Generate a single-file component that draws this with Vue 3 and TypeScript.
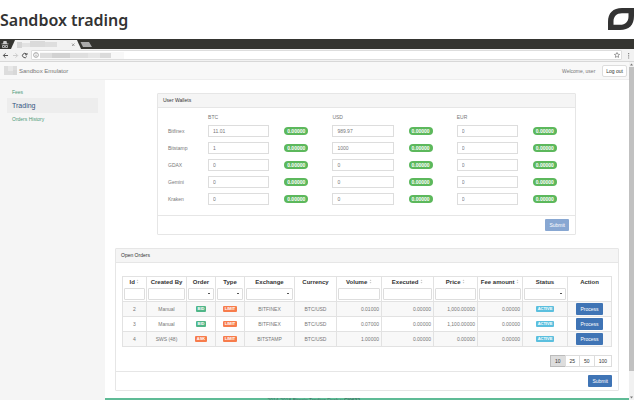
<script setup lang="ts">
import { ref } from 'vue'

interface Wallet {
  exchange: string
  amounts: string[]
}

interface Column {
  label: string
  width: number
  sortable: boolean
  filter: 'text' | 'select' | 'none'
}

interface Order {
  id: number
  createdBy: string
  side: 'BID' | 'ASK'
  type: string
  exchange: string
  currency: string
  volume: string
  executed: string
  price: string
  fee: string
  status: string
}

const currencies = ['BTC', 'USD', 'EUR']

const wallets = ref<Wallet[]>([
  { exchange: 'Bitfinex', amounts: ['11.01', '989.97', '0'] },
  { exchange: 'Bitstamp', amounts: ['1', '1000', '0'] },
  { exchange: 'GDAX', amounts: ['0', '0', '0'] },
  { exchange: 'Gemini', amounts: ['0', '0', '0'] },
  { exchange: 'Kraken', amounts: ['0', '0', '0'] },
])

const columns: Column[] = [
  { label: 'Id', width: 24, sortable: true, filter: 'text' },
  { label: 'Created By', width: 40, sortable: false, filter: 'text' },
  { label: 'Order', width: 29, sortable: false, filter: 'select' },
  { label: 'Type', width: 29, sortable: false, filter: 'select' },
  { label: 'Exchange', width: 50, sortable: false, filter: 'select' },
  { label: 'Currency', width: 42, sortable: false, filter: 'none' },
  { label: 'Volume', width: 45, sortable: true, filter: 'text' },
  { label: 'Executed', width: 52, sortable: true, filter: 'text' },
  { label: 'Price', width: 44, sortable: true, filter: 'text' },
  { label: 'Fee amount', width: 45, sortable: true, filter: 'text' },
  { label: 'Status', width: 45, sortable: false, filter: 'select' },
  { label: 'Action', width: 44, sortable: false, filter: 'none' },
]
const totalWidth = columns.reduce((sum, c) => sum + c.width, 0)

const orders: Order[] = [
  { id: 2, createdBy: 'Manual', side: 'BID', type: 'LIMIT', exchange: 'BITFINEX', currency: 'BTC/USD', volume: '0.01000', executed: '0.00000', price: '1,000.00000', fee: '0.00000', status: 'ACTIVE' },
  { id: 3, createdBy: 'Manual', side: 'BID', type: 'LIMIT', exchange: 'BITFINEX', currency: 'BTC/USD', volume: '0.07000', executed: '0.00000', price: '1,100.00000', fee: '0.00000', status: 'ACTIVE' },
  { id: 4, createdBy: 'SWS (48)', side: 'ASK', type: 'LIMIT', exchange: 'BITSTAMP', currency: 'BTC/USD', volume: '1.00000', executed: '0.00000', price: '0.00000', fee: '0.00000', status: 'ACTIVE' },
]

const pageSizes = [10, 25, 50, 100]
const pageSize = ref(10)
</script>

<template>
  <div class="page">
    <header class="masthead">
      <h1>Sandbox trading</h1>
      <svg class="logo" viewBox="0 0 26 22" aria-hidden="true">
        <path fill="#333" fill-rule="evenodd" d="M0 22V14C0 5 5 0 14 0H26V8C26 17 21 22 12 22ZM5.500 16.800H12C17.500 16.800 20.500 13.500 20.500 8.500V5.200H14C8.500 5.200 5.500 8.500 5.500 13.500Z" />
      </svg>
    </header>

    <section class="browser">
      <div class="tabs">
        <svg class="incognito" viewBox="0 0 16 9" aria-hidden="true">
          <path fill="#ccc" d="M3.500 1H6.500L7 3.500H3ZM1.500 3.500H8.500V4.300H1.500Z" />
          <path fill="none" stroke="#ccc" stroke-width=".8" d="M2.500 7.500V5.500H4.500V7.500ZM5.500 7.500V5.500H7.500V7.500Z" />
        </svg>
        <svg class="tab-shape" viewBox="0 0 88 9" aria-hidden="true">
          <path fill="#f2f2f2" d="M0 9L4 0H66L70 9Z" />
          <rect x="6" y="2" width="5" height="6" fill="#d5d5d5" />
          <rect x="11" y="3" width="12" height="4" fill="#e2e2e2" />
          <rect x="19" y="1" width="15" height="6" fill="#dadada" />
          <rect x="34" y="2" width="12" height="5" fill="#dedede" />
          <path stroke="#888" stroke-width=".8" d="M61 3.500L63.500 6M63.500 3.500L61 6" />
          <path fill="#aaa" d="M69.500 2H78L81 7H72Z" />
        </svg>
      </div>
      <div class="toolbar">
        <svg class="nav-icons" viewBox="0 0 30 12" aria-hidden="true">
          <g fill="none" stroke-width="1">
            <path stroke="#555" d="M8 5.500H3.500M5.500 3.300L3.300 5.500L5.500 7.700" />
            <path stroke="#ccc" d="M13 5.500H17.500M15.500 3.300L17.700 5.500L15.500 7.700" />
            <path stroke="#555" d="M26.500 4.200A2.200 2.200 0 1 0 26.700 6.500M27 3V4.800H25" />
          </g>
        </svg>
        <div class="address">
          <svg class="info" viewBox="0 0 8 8" aria-hidden="true">
            <circle cx="4" cy="4" r="2.400" fill="none" stroke="#888" stroke-width=".7" />
            <path stroke="#888" stroke-width=".8" d="M4 3.600V5.400M4 2.400V3" />
          </svg>
          <svg class="url-blocks" viewBox="0 0 84 7" aria-hidden="true">
            <rect width="84" height="7" fill="#f8f8f8" />
            <rect y="1" width="12" height="5" fill="#ddd" />
            <rect x="12" y="1" width="18" height="5" fill="#d2d2d2" />
            <rect x="30" y="1" width="18" height="5" fill="#dfdfdf" />
            <rect x="48" y="1" width="12" height="5" fill="#e6e6e6" />
            <rect x="60" y="1" width="11" height="5" fill="#dbdbdb" />
          </svg>
          <svg class="star" viewBox="0 0 8 8" aria-hidden="true">
            <path fill="none" stroke="#777" stroke-width=".7" d="M4 1.500L4.800 3.200L6.600 3.400L5.300 4.600L5.600 6.400L4 5.500L2.400 6.400L2.700 4.600L1.400 3.400L3.200 3.200Z" />
          </svg>
        </div>
        <svg class="dots" viewBox="0 0 11 12" aria-hidden="true">
          <path fill="#888" d="M5 3H6.200V4.200H5ZM5 5.200H6.200V6.400H5ZM5 7.400H6.200V8.600H5Z" />
        </svg>
      </div>

      <div class="viewport">
        <div class="app">
          <nav class="navbar">
            <svg class="brand-mark" viewBox="0 0 13 9" aria-hidden="true">
              <rect width="13" height="9" fill="#ddd" />
              <rect x="4" width="5" height="5" fill="#e8e8e8" />
              <rect x="9" y="4" width="4" height="5" fill="#d8d8d8" />
            </svg>
            <span class="brand">Sandbox Emulator</span>
            <span class="welcome">Welcome, user</span>
            <button type="button" class="logout">Log out</button>
          </nav>

          <div class="body">
            <aside class="sidebar">
              <a href="#fees">Fees</a>
              <a href="#trading" class="active">Trading</a>
              <a href="#history">Orders History</a>
            </aside>

            <main class="content">
              <form class="panel wallets" @submit.prevent>
                <h2>User Wallets</h2>
                <div class="wallet-grid">
                  <span></span>
                  <template v-for="c in currencies" :key="c">
                    <span class="currency">{{ c }}</span>
                    <span></span>
                  </template>
                  <template v-for="w in wallets" :key="w.exchange">
                    <span>{{ w.exchange }}</span>
                    <template v-for="(c, i) in currencies" :key="c">
                      <input v-model="w.amounts[i]" type="text" :aria-label="`${w.exchange} ${c}`" />
                      <span class="badge">0.00000</span>
                    </template>
                  </template>
                </div>
                <footer>
                  <button type="submit" class="primary muted">Submit</button>
                </footer>
              </form>

              <section class="panel">
                <h2>Open Orders</h2>
                <div class="orders">
                  <table>
                    <colgroup>
                      <col v-for="c in columns" :key="c.label" :style="{ width: (c.width / totalWidth) * 100 + '%' }" />
                    </colgroup>
                    <thead>
                      <tr class="titles">
                        <th v-for="c in columns" :key="c.label" scope="col">
                          {{ c.label }}
                          <svg v-if="c.sortable" class="sort" viewBox="0 0 3 5" aria-hidden="true">
                            <path fill="#ccc" d="M0.500 2L1.500 0.500L2.500 2ZM0.500 3L1.500 4.500L2.500 3Z" />
                          </svg>
                        </th>
                      </tr>
                      <tr class="filters">
                        <td v-for="c in columns" :key="c.label">
                          <input v-if="c.filter === 'text'" type="text" :aria-label="c.label" />
                          <select v-else-if="c.filter === 'select'" :aria-label="c.label">
                            <option></option>
                          </select>
                        </td>
                      </tr>
                    </thead>
                    <tbody>
                      <tr v-for="o in orders" :key="o.id">
                        <td>{{ o.id }}</td>
                        <td>{{ o.createdBy }}</td>
                        <td><span class="tag" :class="o.side.toLowerCase()">{{ o.side }}</span></td>
                        <td><span class="tag limit">{{ o.type }}</span></td>
                        <td>{{ o.exchange }}</td>
                        <td>{{ o.currency }}</td>
                        <td class="num">{{ o.volume }}</td>
                        <td class="num">{{ o.executed }}</td>
                        <td class="num">{{ o.price }}</td>
                        <td class="num">{{ o.fee }}</td>
                        <td><span class="tag status">{{ o.status }}</span></td>
                        <td><button type="button" class="primary">Process</button></td>
                      </tr>
                    </tbody>
                  </table>
                  <div class="sizes">
                    <button v-for="s in pageSizes" :key="s" type="button" :class="{ on: s === pageSize }" @click="pageSize = s">{{ s }}</button>
                  </div>
                </div>
                <footer>
                  <button type="button" class="primary">Submit</button>
                </footer>
              </section>

              <div class="copyright">2014-2018 Bitcoin Trading Desk v <b>CI9632</b></div>
            </main>
          </div>
        </div>
        <div class="scrollbar" aria-hidden="true">
          <svg viewBox="0 0 5 5"><path fill="#777" d="M1 3.500L2.500 1.500L4 3.500Z" /></svg>
          <div class="thumb"></div>
          <svg viewBox="0 0 5 5"><path fill="#777" d="M1 1.500L2.500 3.500L4 1.500Z" /></svg>
        </div>
      </div>
    </section>
  </div>
</template>

<style>
body {
  margin: 0;
  background: #fff;
}
</style>

<style scoped>
.page,
.page * {
  box-sizing: border-box;
}

.page {
  display: flex;
  flex-direction: column;
  height: 100vh;
  overflow: hidden;
  font-family: "Liberation Sans", Arial, sans-serif;
  font-size: 5px;
  line-height: 6px;
  color: #777;
}

button,
input,
select {
  margin: 0;
  font: inherit;
  color: inherit;
}

svg {
  display: block;
  flex: none;
}

.masthead {
  display: flex;
  flex: none;
  align-items: flex-start;
  justify-content: space-between;
  height: 39px;
  padding-top: 8px;
}

h1 {
  margin: 0;
  font: 600 16px/24px "Noto Sans", sans-serif;
  color: #333;
}

.logo {
  width: 26px;
  height: 22px;
}

.browser {
  display: flex;
  flex: 1;
  flex-direction: column;
  min-height: 0;
}

.tabs {
  display: flex;
  flex: none;
  align-items: flex-end;
  height: 10px;
  background: #353531;
}

.incognito {
  width: 16px;
  height: 9px;
  margin-right: -5px;
}

.tab-shape {
  width: 88px;
  height: 9px;
}

.toolbar {
  display: flex;
  flex: none;
  height: 13px;
  padding: 1px 0;
  background: #f2f2f2;
  border-bottom: 1px solid #d8d8d8;
}

.nav-icons {
  width: 30px;
  height: 12px;
}

.address {
  display: flex;
  flex: 1;
  align-items: center;
  margin: 0 1px;
  background: #fff;
  border: 1px solid #ddd;
  border-radius: 1px;
}

.info,
.star {
  width: 8px;
  height: 8px;
}

.url-blocks {
  width: 84px;
  height: 7px;
}

.star {
  margin-left: auto;
}

.dots {
  width: 11px;
  height: 12px;
}

.viewport {
  display: flex;
  flex: 1;
  min-height: 0;
}

.app {
  display: flex;
  flex: 1;
  flex-direction: column;
  min-width: 0;
}

.navbar {
  display: flex;
  flex: none;
  align-items: center;
  height: 18px;
  padding: 0 2px 0 4px;
  background: #f8f8f8;
  border-bottom: 1px solid #eee;
}

.brand-mark {
  width: 13px;
  height: 9px;
  margin-right: 2px;
}

.brand {
  font-size: 6px;
  line-height: 8px;
}

.welcome {
  margin: 0 7px 0 auto;
}

.logout {
  height: 12px;
  padding: 0 3px;
  color: #333;
  background: #fff;
  border: 1px solid #ddd;
  border-radius: 2px;
}

.body {
  display: flex;
  flex: 1;
  min-height: 0;
}

.sidebar {
  flex: none;
  width: 105px;
  padding: 6px 7px;
  background: #f5f5f5;
}

.sidebar a {
  display: block;
  padding: 3px 5px;
  color: #4d9a78;
  text-decoration: none;
}

.sidebar .active {
  font-size: 7px;
  line-height: 9px;
  color: #35557f;
  background: #ededed;
}

.content {
  display: flex;
  flex: 1;
  flex-direction: column;
  min-width: 0;
  padding-top: 13px;
}

.panel {
  flex: none;
  margin: 0 10px 13px;
  background: #fff;
  border: 1px solid #e6e6e6;
  border-radius: 1px;
}

.wallets {
  margin: 0 53px 13px 52px;
}

h2 {
  margin: 0;
  padding: 4px 5px;
  font-size: 5px;
  font-weight: 400;
  line-height: 5px;
  color: #333;
  background: #f5f5f5;
  border-bottom: 1px solid #e6e6e6;
}

.wallet-grid {
  display: grid;
  grid-template-columns: 40fr repeat(3, 61fr 63fr);
  grid-template-rows: 11px;
  grid-auto-rows: 12px;
  row-gap: 5px;
  align-items: center;
  margin-right: -6px;
  padding: 1px 0 10px 10px;
}

.currency {
  align-self: end;
}

.wallet-grid input {
  width: 100%;
  height: 12px;
  padding: 0 4px;
  background: #fff;
  border: 1px solid #ddd;
}

.badge {
  width: 24px;
  height: 8px;
  margin-left: 15px;
  font-weight: 700;
  line-height: 8px;
  color: #fff;
  text-align: center;
  background: #5cb85c;
  border-radius: 4px;
}

.panel footer {
  display: flex;
  justify-content: flex-end;
  padding: 3px 6px;
  border-top: 1px solid #e6e6e6;
}

.primary {
  height: 12px;
  padding: 0 4px;
  color: #fff;
  background: #3f74b5;
  border: 0;
  border-radius: 1px;
}

.muted {
  background: #88a7d2;
}

.orders {
  padding: 13px 6px 4px;
}

table {
  width: 100%;
  table-layout: fixed;
  border-spacing: 0;
  border-collapse: collapse;
}

th,
td {
  height: 15px;
  padding: 0;
  text-align: center;
  white-space: nowrap;
  border: 1px solid #e2e2e2;
}

.titles th {
  height: 10px;
  font-size: 6px;
  line-height: 8px;
  color: #333;
  border-bottom: 0;
}

.filters td {
  padding: 0 1px;
  border-top: 0;
}

.sort {
  display: inline-block;
  width: 3px;
  height: 5px;
}

.filters input,
.filters select {
  display: block;
  width: 100%;
  height: 12px;
  padding: 0 2px;
  background: #fff;
  border: 1px solid #ddd;
  border-radius: 1px;
}

.filters select {
  appearance: none;
  background: linear-gradient(#555, #555) right 3px center / 2px 1px no-repeat #fff;
}

tbody tr:nth-child(odd) {
  background: #f8f8f8;
}

td.num {
  padding-right: 2px;
  text-align: right;
}

.tag {
  display: inline-block;
  padding: 0 2px;
  font-size: 4px;
  font-weight: 700;
  line-height: 6px;
  color: #fff;
  vertical-align: middle;
  border-radius: 1px;
}

.bid {
  background: #50b688;
}

.ask,
.limit {
  background: #f77c4c;
}

.status {
  background: #5bbfde;
}

.sizes {
  display: flex;
  justify-content: flex-end;
  margin-top: 8px;
}

.sizes button {
  height: 12px;
  padding: 0 4px;
  margin-left: -1px;
  color: #333;
  background: #fff;
  border: 1px solid #ddd;
}

.sizes .on {
  background: #ddd;
  border-color: #bbb;
}

.copyright {
  flex: none;
  margin-top: -6px;
  padding: 0 0 8px 31%;
  line-height: 4px;
  color: #476;
  background: #5fbb96;
}

.scrollbar {
  display: flex;
  flex: none;
  flex-direction: column;
  width: 5px;
  background: #f1f1f1;
}

.scrollbar svg {
  width: 5px;
  height: 5px;
}

.thumb {
  flex: none;
  height: 90%;
  margin-bottom: auto;
  background: #c1c1c1;
}
</style>
